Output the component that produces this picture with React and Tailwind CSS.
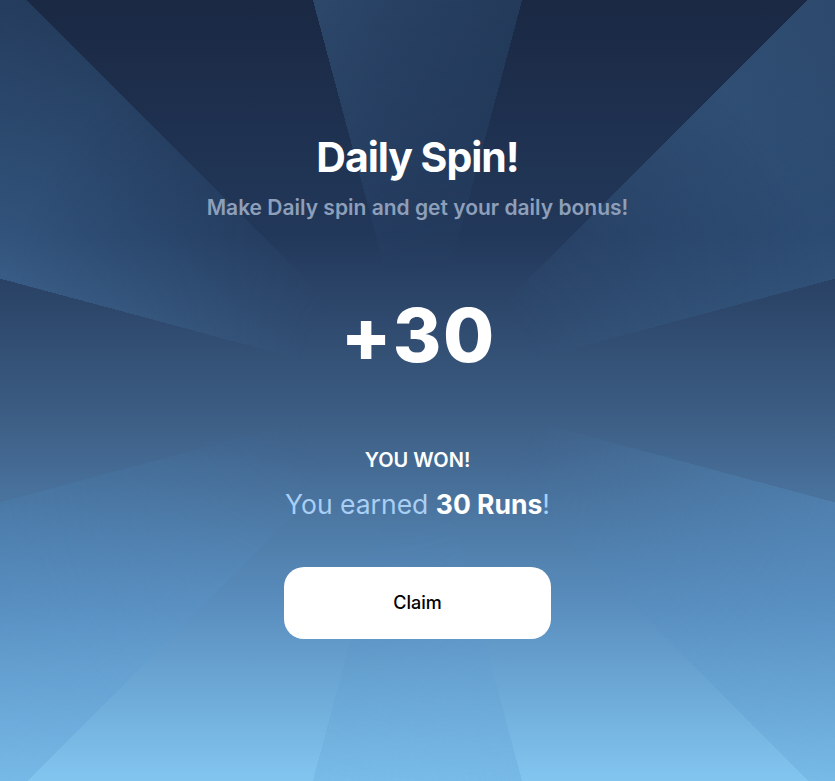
export default function App() {
  return (
    <div className="relative min-h-screen w-full overflow-hidden bg-[linear-gradient(to_bottom,#1a2843_0%,#22385a_30%,#3b5b81_52%,#5a8fbf_78%,#82c6f0_100%)] font-['Inter',sans-serif]">
      {/* sunburst rays */}
      <div className="pointer-events-none absolute inset-0 bg-[repeating-conic-gradient(from_-15deg_at_50%_50%,rgba(92,155,210,0.3)_0deg,rgba(78,143,198,0.2)_30deg,transparent_30deg,transparent_60deg)] [mask-image:radial-gradient(circle_at_50%_50%,transparent_120px,rgba(0,0,0,0.55)_280px,black_430px)]" />

      <div className="relative flex flex-col items-center pt-[133px] text-center">
        <h1 className="text-[41px] leading-[48px] font-bold tracking-tight text-white">
          Daily Spin!
        </h1>
        <p className="mt-[13px] text-[21px] leading-[28px] font-semibold text-[#8e9fba]">
          Make Daily spin and get your daily bonus!
        </p>

        <div className="mt-[73px] pl-[0.02em] text-[74px] leading-[80px] font-extrabold tracking-[0.02em] text-white">
          +30
        </div>

        <div className="mt-[71px] text-xl leading-[28px] font-semibold text-white">
          YOU WON!
        </div>
        <p className="mt-[14px] text-[26.5px] leading-[32px] text-[#a9cff5]">
          You earned <span className="font-bold text-white">30 Runs</span>!
        </p>

        <button
          type="button"
          className="mt-[47px] flex h-[72px] w-[267px] items-center justify-center rounded-[20px] bg-white text-lg font-medium text-black"
        >
          Claim
        </button>
      </div>
    </div>
  );
}
